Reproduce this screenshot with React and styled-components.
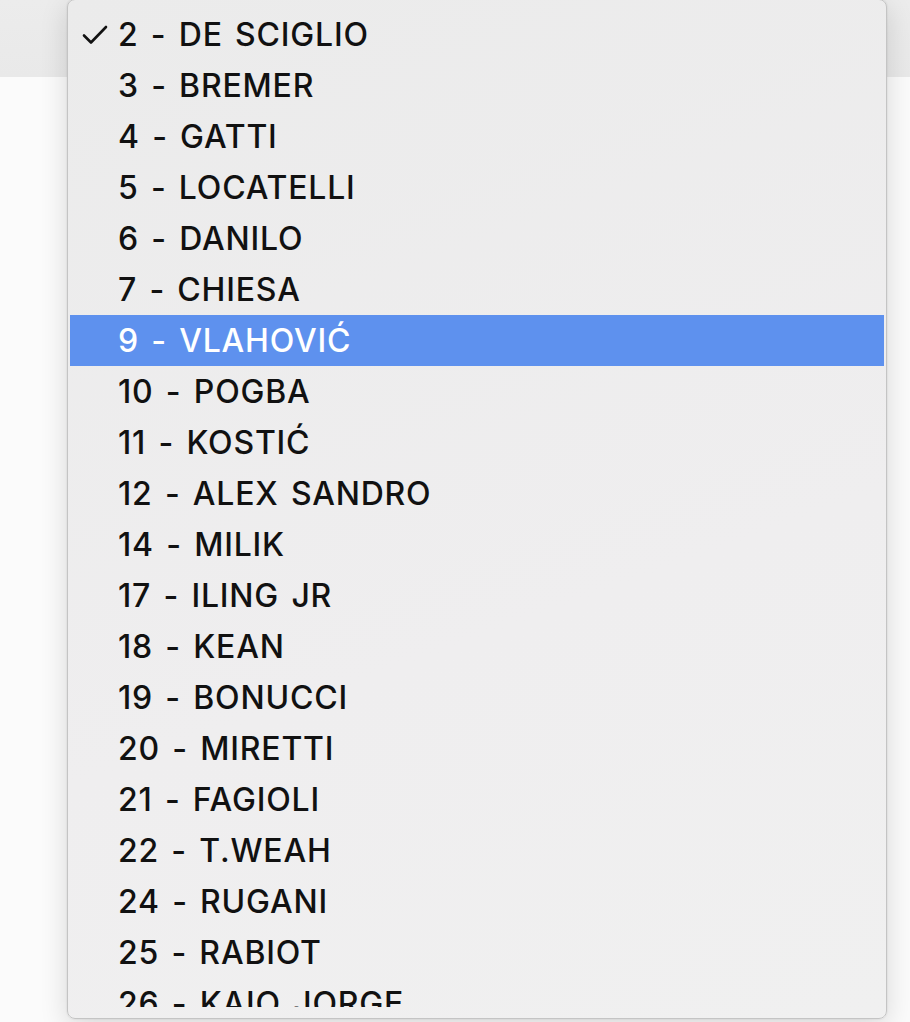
import React from 'react';
import styled, { createGlobalStyle } from 'styled-components';

const GlobalStyle = createGlobalStyle`
  html, body {
    margin: 0;
    padding: 0;
    background: #fbfbfb;
    overflow: hidden;
  }
`;

const Page = styled.div`
  position: relative;
  width: 910px;
  height: 1022px;
  overflow: hidden;
  background: #fbfbfb;
`;

const TopBar = styled.div`
  height: 77px;
  background: linear-gradient(180deg, #ececec 0%, #e9e9e9 100%);
`;

const Menu = styled.div`
  position: absolute;
  left: 67px;
  top: -1px;
  width: 820px;
  height: 1020px;
  box-sizing: border-box;
  background: linear-gradient(160deg, #ebebeb 0%, #efeeef 60%, #f0f0f0 100%);
  border: 1px solid #c4c4c4;
  border-radius: 8px;
  box-shadow: 0 8px 28px rgba(0, 0, 0, 0.14), 0 0 2px rgba(0, 0, 0, 0.12);
  padding: 9px 2px 11px 2px;
`;

const Scroller = styled.div`
  height: 100%;
  overflow: hidden;
`;

const Item = styled.div`
  display: flex;
  align-items: center;
  height: 51px;
  box-sizing: border-box;
  padding-left: 48px;
  position: relative;
  font-family: Inter, "Liberation Sans", sans-serif;
  font-size: 32px;
  font-weight: 500;
  letter-spacing: 0.8px;
  word-spacing: 3px;
  color: ${({ active }) => (active ? '#ffffff' : '#111111')};
  background: ${({ active }) => (active ? '#5e91ee' : 'transparent')};
  white-space: nowrap;
`;

const Check = styled.svg`
  position: absolute;
  left: 12px;
  top: 15px;
  width: 26px;
  height: 22px;
`;

const players = [
  '2 - DE SCIGLIO',
  '3 - BREMER',
  '4 - GATTI',
  '5 - LOCATELLI',
  '6 - DANILO',
  '7 - CHIESA',
  '9 - VLAHOVIĆ',
  '10 - POGBA',
  '11 - KOSTIĆ',
  '12 - ALEX SANDRO',
  '14 - MILIK',
  '17 - ILING JR',
  '18 - KEAN',
  '19 - BONUCCI',
  '20 - MIRETTI',
  '21 - FAGIOLI',
  '22 - T.WEAH',
  '24 - RUGANI',
  '25 - RABIOT',
  '26 - KAIO JORGE',
  '27 - ROVELLA',
];

export default function App() {
  const selected = 0;
  const highlighted = 6;

  return (
    <Page>
      <GlobalStyle />
      <TopBar />
      <Menu>
        <Scroller>
          {players.map((name, i) => (
            <Item key={name} active={i === highlighted}>
              {i === selected && (
                <Check viewBox="0 0 26 22">
                  <path
                    d="M2 11.5 L9 18.5 L24 3"
                    fill="none"
                    stroke={i === highlighted ? '#fff' : '#111'}
                    strokeWidth="2.6"
                    strokeLinecap="round"
                    strokeLinejoin="round"
                  />
                </Check>
              )}
              {name}
            </Item>
          ))}
        </Scroller>
      </Menu>
    </Page>
  );
}
